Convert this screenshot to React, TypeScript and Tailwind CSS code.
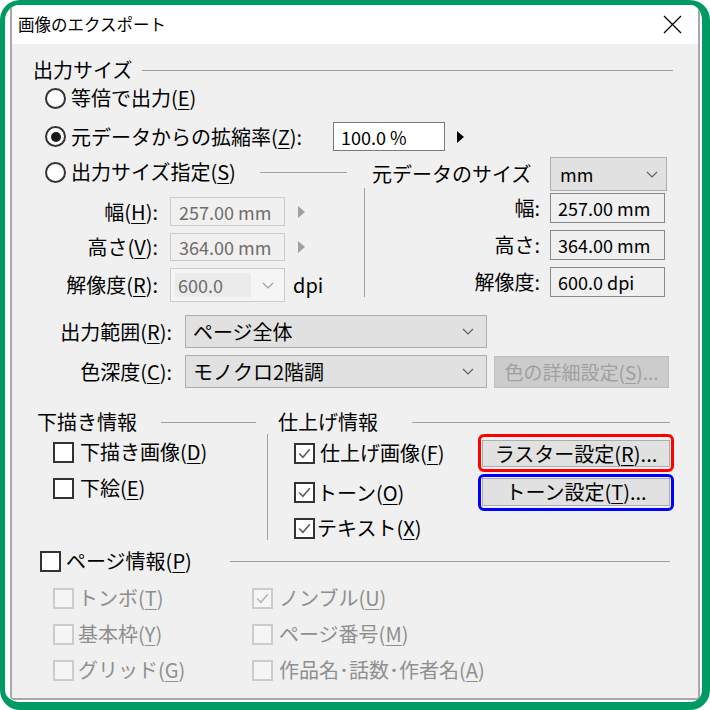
import React from "react";

// 画像のエクスポート dialog

const U = ({ c }: { c: string }) => (
  <span className="underline decoration-1 underline-offset-[3px]">{c}</span>
);

const Radio = ({ on }: { on?: boolean }) => (
  <span className="flex h-[21px] w-[21px] shrink-0 items-center justify-center rounded-full border-2 border-[#333333] bg-white">
    {on && <span className="h-[10px] w-[10px] rounded-full bg-[#1a1a1a]" />}
  </span>
);

const Check = ({ on, off }: { on?: boolean; off?: boolean }) => (
  <span
    className={`flex h-[21px] w-[21px] shrink-0 items-center justify-center border-2 ${
      off ? "border-[#cccccc] bg-[#f5f5f5]" : "border-[#333333] bg-white"
    }`}
  >
    {on && (
      <svg width="15" height="15" viewBox="0 0 14 14">
        <polyline
          points="2,7 5.5,10.5 12,3"
          fill="none"
          stroke={off ? "#b4b4b4" : "#5c5c5c"}
          strokeWidth="1.5"
        />
      </svg>
    )}
  </span>
);

const Chevron = ({ color = "#606060" }: { color?: string }) => (
  <svg width="12" height="7" viewBox="0 0 12 7">
    <polyline points="1,1 6,6 11,1" fill="none" stroke={color} strokeWidth="1.2" />
  </svg>
);

const Tri = ({ color }: { color: string }) => (
  <svg width="7" height="12" viewBox="0 0 7 12">
    <polygon points="0,0 7,6 0,12" fill={color} />
  </svg>
);

const Line = ({ className }: { className: string }) => (
  <div className={`h-px bg-[#a0a0a0] ${className}`} />
);

const DisabledBox = ({ children }: { children: React.ReactNode }) => (
  <div className="ml-[12px] flex h-full w-[115px] items-center border border-[#cccccc] bg-[#f0f0f0] pl-[8px] text-[18px] text-[#6d6d6d]">
    {children}
  </div>
);

const ReadBox = ({ children }: { children: React.ReactNode }) => (
  <div className="ml-[10px] flex h-full w-[115px] items-center border border-[#8a8a8a] bg-[#f0f0f0] pl-[7px] text-[18px]">
    {children}
  </div>
);

const Combo = ({ children }: { children: React.ReactNode }) => (
  <div className="ml-[13px] flex h-full w-[302px] items-center border border-[#adadad] bg-[#e1e1e1] pl-[7px] pr-[12px]">
    <span>{children}</span>
    <span className="ml-auto">
      <Chevron />
    </span>
  </div>
);

const Btn = ({ children }: { children: React.ReactNode }) => (
  <div className="flex w-[188px] items-center justify-center border border-[#adadad] bg-[#e1e1e1]">
    {children}
  </div>
);

export default function App() {
  return (
    <div className="h-[710px] w-[710px] overflow-hidden rounded-[20px] border-b-[8px] border-l-[5px] border-r-[8px] border-t-[5px] border-[#009b63] bg-white font-['Noto_Sans_CJK_JP',sans-serif] text-[20px] leading-none text-black">
      <div className="ml-[5px] flex h-[695px] w-[690px] flex-col overflow-hidden rounded-b-[4px] border-x-2 border-b-2 border-[#a8a8a8]">
        {/* title bar */}
        <div className="flex h-[39px] shrink-0 items-center justify-between bg-white pl-[6px] pr-[16px]">
          <span className="text-[16.5px]">画像のエクスポート</span>
          <svg width="19" height="19" viewBox="0 0 19 19">
            <path d="M1 1 L18 18 M18 1 L1 18" stroke="#000" strokeWidth="1.3" />
          </svg>
        </div>

        <div className="flex flex-1 flex-col bg-[#f0f0f0]">
          {/* 出力サイズ */}
          <div className="mt-[14px] flex h-[24px] items-center">
            <span className="ml-[21px]">出力サイズ</span>
            <Line className="ml-[10px] mr-[25px] flex-1" />
          </div>
          <div className="mt-[4px] flex h-[24px] items-center">
            <span className="ml-[33px]">
              <Radio />
            </span>
            <span className="ml-[5px]">
              等倍で出力(<U c="E" />)
            </span>
          </div>
          <div className="mt-[12px] flex h-[29px] items-center">
            <span className="ml-[33px]">
              <Radio on />
            </span>
            <span className="ml-[5px] w-[262px]">
              元データからの拡縮率(<U c="Z" />):
            </span>
            <div className="flex h-full w-[112px] items-center border border-[#7a7a7a] bg-white pl-[7px] text-[18px]">
              100.0 %
            </div>
            <span className="ml-[12px]">
              <Tri color="#000000" />
            </span>
          </div>

          <div className="mt-[6px] flex">
            <div className="flex w-[352px] flex-col">
              <div className="mt-[3px] flex h-[24px] items-center">
                <span className="ml-[33px]">
                  <Radio />
                </span>
                <span className="ml-[5px]">
                  出力サイズ指定(<U c="S" />)
                </span>
                <Line className="ml-auto mr-[17px] w-[87px]" />
              </div>
              <div className="mt-[13px] flex h-[29px] items-center">
                <span className="w-[146px] text-right">
                  幅(<U c="H" />):
                </span>
                <DisabledBox>257.00 mm</DisabledBox>
                <span className="ml-[13px]">
                  <Tri color="#a0a0a0" />
                </span>
              </div>
              <div className="mt-[7px] flex h-[28px] items-center">
                <span className="w-[146px] text-right">
                  高さ(<U c="V" />):
                </span>
                <DisabledBox>364.00 mm</DisabledBox>
                <span className="ml-[13px]">
                  <Tri color="#a0a0a0" />
                </span>
              </div>
              <div className="mt-[7px] flex h-[34px] items-center">
                <span className="w-[146px] text-right">
                  解像度(<U c="R" />):
                </span>
                <div className="ml-[12px] flex h-full w-[115px] items-center border border-[#cccccc] bg-[#f5f5f5] p-[4px]">
                  <div className="flex h-full w-[76px] items-center bg-[#ebebeb] pl-[3px] text-[18px] text-[#6d6d6d]">
                    600.0
                  </div>
                  <span className="ml-auto mr-[6px]">
                    <Chevron color="#a0a0a0" />
                  </span>
                </div>
                <span className="ml-[8px]">dpi</span>
              </div>
            </div>

            <div className="flex flex-1 flex-col">
              <div className="flex h-[34px] items-center">
                <span className="ml-[8px] w-[178px]">元データのサイズ</span>
                <div className="flex h-full w-[117px] items-center border border-[#adadad] bg-[#e1e1e1] pl-[9px] pr-[8px] text-[18px]">
                  <span>mm</span>
                  <span className="ml-auto">
                    <Chevron />
                  </span>
                </div>
              </div>
              <div className="-mt-[3px] flex flex-col border-l border-[#a0a0a0] pt-[5px]">
                <div className="flex h-[30px] items-center">
                  <span className="w-[175px] text-right">幅:</span>
                  <ReadBox>257.00 mm</ReadBox>
                </div>
                <div className="mt-[7px] flex h-[30px] items-center">
                  <span className="w-[175px] text-right">高さ:</span>
                  <ReadBox>364.00 mm</ReadBox>
                </div>
                <div className="mt-[7px] flex h-[30px] items-center">
                  <span className="w-[175px] text-right">解像度:</span>
                  <ReadBox>600.0 dpi</ReadBox>
                </div>
              </div>
            </div>
          </div>

          <div className="mt-[13px] flex h-[33px] items-center">
            <span className="w-[160px] text-right">
              出力範囲(<U c="R" />):
            </span>
            <Combo>ページ全体</Combo>
          </div>
          <div className="mt-[7px] flex h-[33px] items-center">
            <span className="w-[160px] text-right">
              色深度(<U c="C" />):
            </span>
            <Combo>モノクロ2階調</Combo>
            <div className="ml-[7px] flex h-[32px] w-[175px] items-center justify-center border border-[#bfbfbf] bg-[#cccccc] text-[19px] text-[#a0a0a0]">
              色の詳細設定(<U c="S" />)...
            </div>
          </div>

          {/* 下描き情報 / 仕上げ情報 */}
          <div className="mt-[22px] flex">
            <div className="flex w-[255px] flex-col">
              <div className="flex h-[24px] items-center">
                <span className="ml-[25px]">下描き情報</span>
                <Line className="ml-auto mr-[11px] w-[95px]" />
              </div>
              <div className="mt-[6px] flex h-[24px] items-center">
                <span className="ml-[41px]">
                  <Check />
                </span>
                <span className="ml-[6px]">
                  下描き画像(<U c="D" />)
                </span>
              </div>
              <div className="mt-[12px] flex h-[24px] items-center">
                <span className="ml-[41px]">
                  <Check />
                </span>
                <span className="ml-[6px]">
                  下絵(<U c="E" />)
                </span>
              </div>
            </div>

            <div className="flex flex-1 flex-col">
              <div className="flex h-[24px] items-center">
                <span className="ml-[11px]">仕上げ情報</span>
                <Line className="ml-auto mr-[28px] w-[258px]" />
              </div>
              <div className="flex flex-col border-l border-[#a0a0a0]">
                <div className="flex h-[38px] items-center">
                  <span className="ml-[26px]">
                    <Check on />
                  </span>
                  <span className="ml-[5px]">
                    仕上げ画像(<U c="F" />)
                  </span>
                  <div className="ml-auto mr-[24px] flex h-[38px] rounded-[6px] border-[3px] border-[#ff0000] px-[1px] pb-[2px] pt-[3px]">
                    <Btn>
                      ラスター設定(<U c="R" />)...
                    </Btn>
                  </div>
                </div>
                <div className="mt-[2px] flex h-[37px] items-center">
                  <span className="ml-[26px]">
                    <Check on />
                  </span>
                  <span className="ml-[2px]">
                    トーン(<U c="O" />)
                  </span>
                  <div className="ml-auto mr-[24px] flex h-[37px] rounded-[6px] border-[3px] border-[#0000ff] px-[1px] pb-[2px] pt-[1px]">
                    <Btn>
                      トーン設定(<U c="T" />)...
                    </Btn>
                  </div>
                </div>
                <div className="mt-[5px] flex h-[24px] items-center">
                  <span className="ml-[26px]">
                    <Check on />
                  </span>
                  <span className="ml-[2px]">
                    テキスト(<U c="X" />)
                  </span>
                </div>
              </div>
            </div>
          </div>

          {/* ページ情報 */}
          <div className="mt-[9px] flex h-[24px] items-center">
            <span className="ml-[28px]">
              <Check />
            </span>
            <span className="ml-[5px]">
              ページ情報(<U c="P" />)
            </span>
            <Line className="ml-auto mr-[28px] w-[440px]" />
          </div>
          {[
            ["トンボ", "T", false, "ノンブル", "U", true],
            ["基本枠", "Y", false, "ページ番号", "M", false],
            ["グリッド", "G", false, "作品名･話数･作者名", "A", false],
          ].map(([a, ak, aon, b, bk, bon], i) => (
            <div
              key={i}
              className={`flex h-[24px] items-center text-[#8f8f8f] ${i === 0 ? "mt-[13px]" : "mt-[12px]"}`}
            >
              <div className="flex w-[240px] items-center">
                <span className="ml-[41px]">
                  <Check off on={aon as boolean} />
                </span>
                <span className="ml-[4px]">
                  {a as string}(<U c={ak as string} />)
                </span>
              </div>
              <div className="flex items-center">
                <Check off on={bon as boolean} />
                <span className="ml-[6px]">
                  {b as string}(<U c={bk as string} />)
                </span>
              </div>
            </div>
          ))}
        </div>
      </div>
    </div>
  );
}
